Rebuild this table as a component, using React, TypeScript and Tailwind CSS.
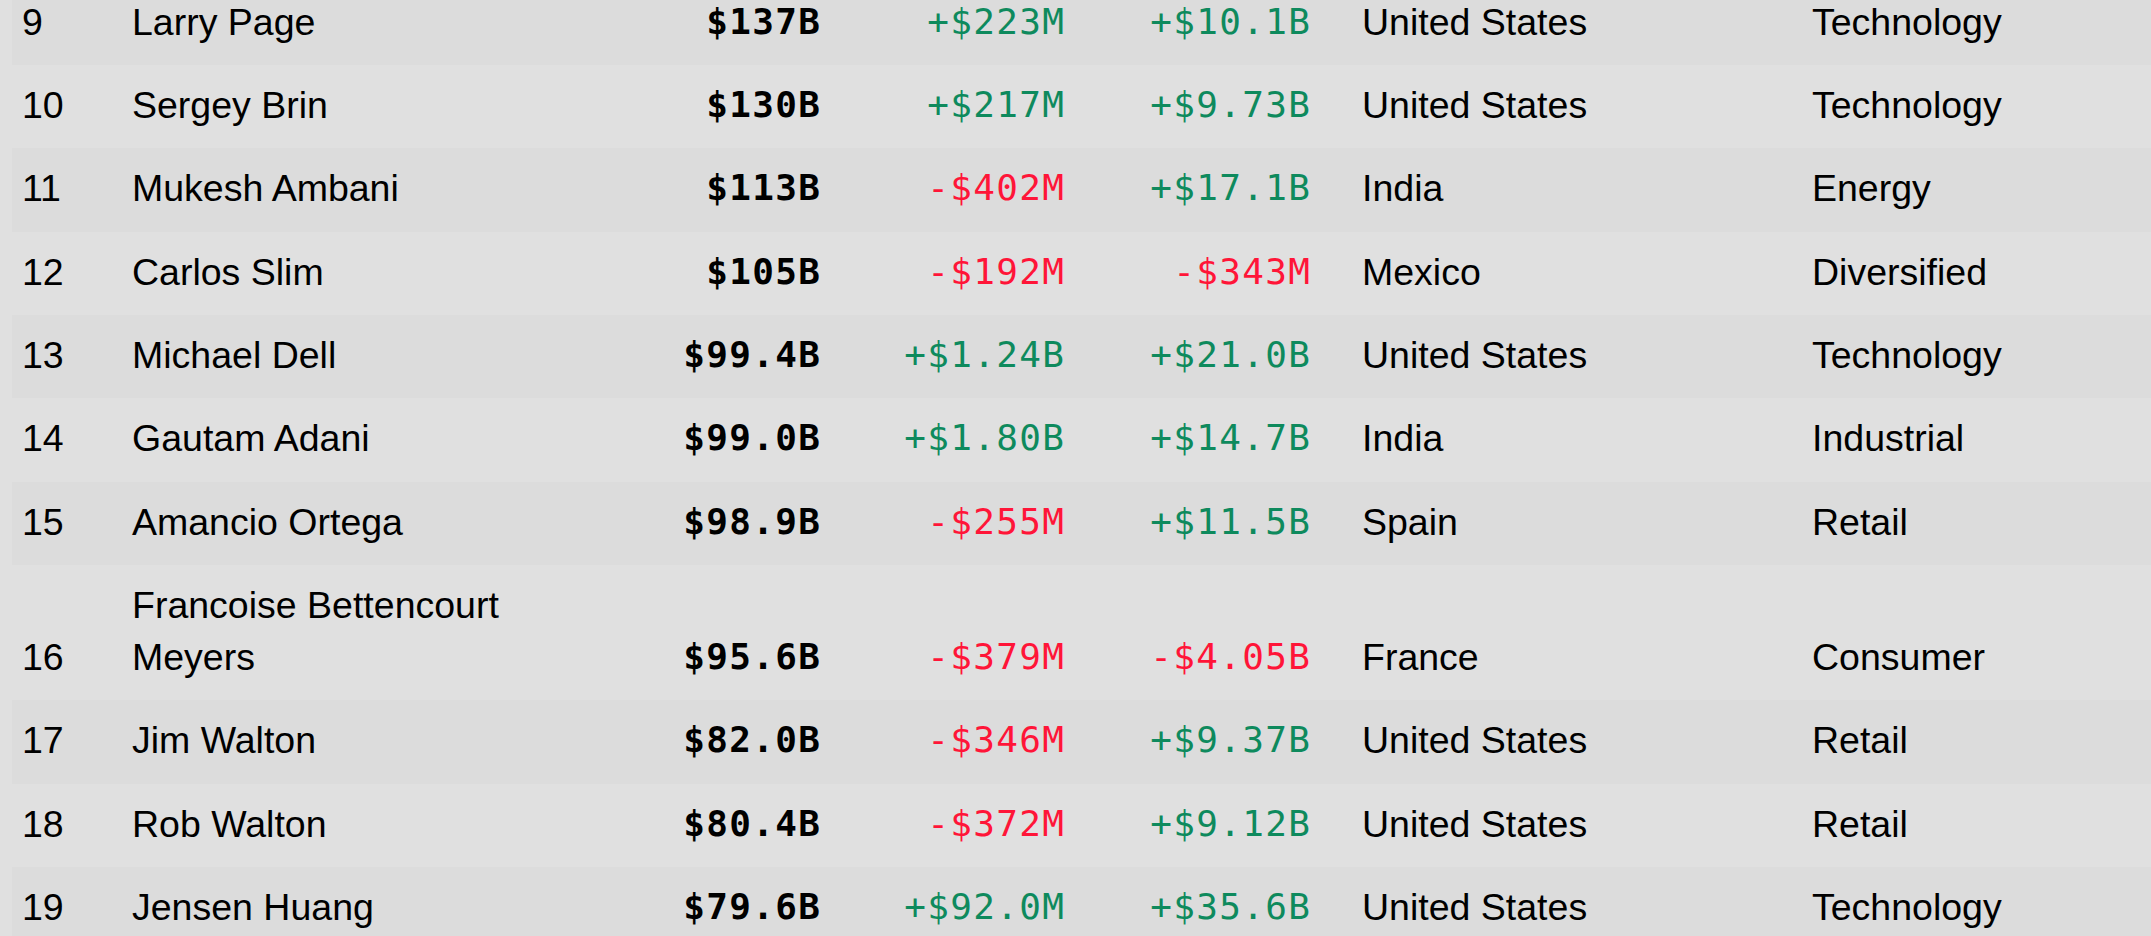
type Row = {
  rank: number;
  name: string;
  worth: string;
  last: string;
  ytd: string;
  country: string;
  industry: string;
};

const rows: Row[] = [
  { rank: 9, name: "Larry Page", worth: "$137B", last: "+$223M", ytd: "+$10.1B", country: "United States", industry: "Technology" },
  { rank: 10, name: "Sergey Brin", worth: "$130B", last: "+$217M", ytd: "+$9.73B", country: "United States", industry: "Technology" },
  { rank: 11, name: "Mukesh Ambani", worth: "$113B", last: "-$402M", ytd: "+$17.1B", country: "India", industry: "Energy" },
  { rank: 12, name: "Carlos Slim", worth: "$105B", last: "-$192M", ytd: "-$343M", country: "Mexico", industry: "Diversified" },
  { rank: 13, name: "Michael Dell", worth: "$99.4B", last: "+$1.24B", ytd: "+$21.0B", country: "United States", industry: "Technology" },
  { rank: 14, name: "Gautam Adani", worth: "$99.0B", last: "+$1.80B", ytd: "+$14.7B", country: "India", industry: "Industrial" },
  { rank: 15, name: "Amancio Ortega", worth: "$98.9B", last: "-$255M", ytd: "+$11.5B", country: "Spain", industry: "Retail" },
  { rank: 16, name: "Francoise Bettencourt Meyers", worth: "$95.6B", last: "-$379M", ytd: "-$4.05B", country: "France", industry: "Consumer" },
  { rank: 17, name: "Jim Walton", worth: "$82.0B", last: "-$346M", ytd: "+$9.37B", country: "United States", industry: "Retail" },
  { rank: 18, name: "Rob Walton", worth: "$80.4B", last: "-$372M", ytd: "+$9.12B", country: "United States", industry: "Retail" },
  { rank: 19, name: "Jensen Huang", worth: "$79.6B", last: "+$92.0M", ytd: "+$35.6B", country: "United States", industry: "Technology" },
];

const mono = "font-['DejaVu_Sans_Mono',monospace] text-[36px] tracking-[1.33px] text-right -mr-[1.33px]";

// red for losses, green for gains
const Change = ({ value }: { value: string }) => (
  <div className={`${mono} ${value.startsWith("-") ? "text-[#ff1538]" : "text-[#0e8a5d]"}`}>{value}</div>
);

export default function App() {
  return (
    <div className="min-h-screen bg-[#e0e0e0] overflow-hidden font-['Liberation_Sans',Arial,sans-serif] text-[37.5px] leading-[52px] text-black">
      <div className="-mt-[18.3px] ml-3">
        {rows.map((r) => (
          <div
            key={r.rank}
            className={`grid grid-cols-[110px_428px_260px_244px_246px_502px_1fr] items-end pl-[10px] pt-[14px] pb-[17.33px] ${
              r.rank % 2 === 1 ? "bg-[#dcdcdc]" : "bg-[#e0e0e0]"
            }`}
          >
            <div>{r.rank}</div>
            <div>{r.name}</div>
            <div className={`${mono} font-bold`}>{r.worth}</div>
            <Change value={r.last} />
            <Change value={r.ytd} />
            <div className="pl-[52px]">{r.country}</div>
            <div>{r.industry}</div>
          </div>
        ))}
      </div>
    </div>
  );
}
